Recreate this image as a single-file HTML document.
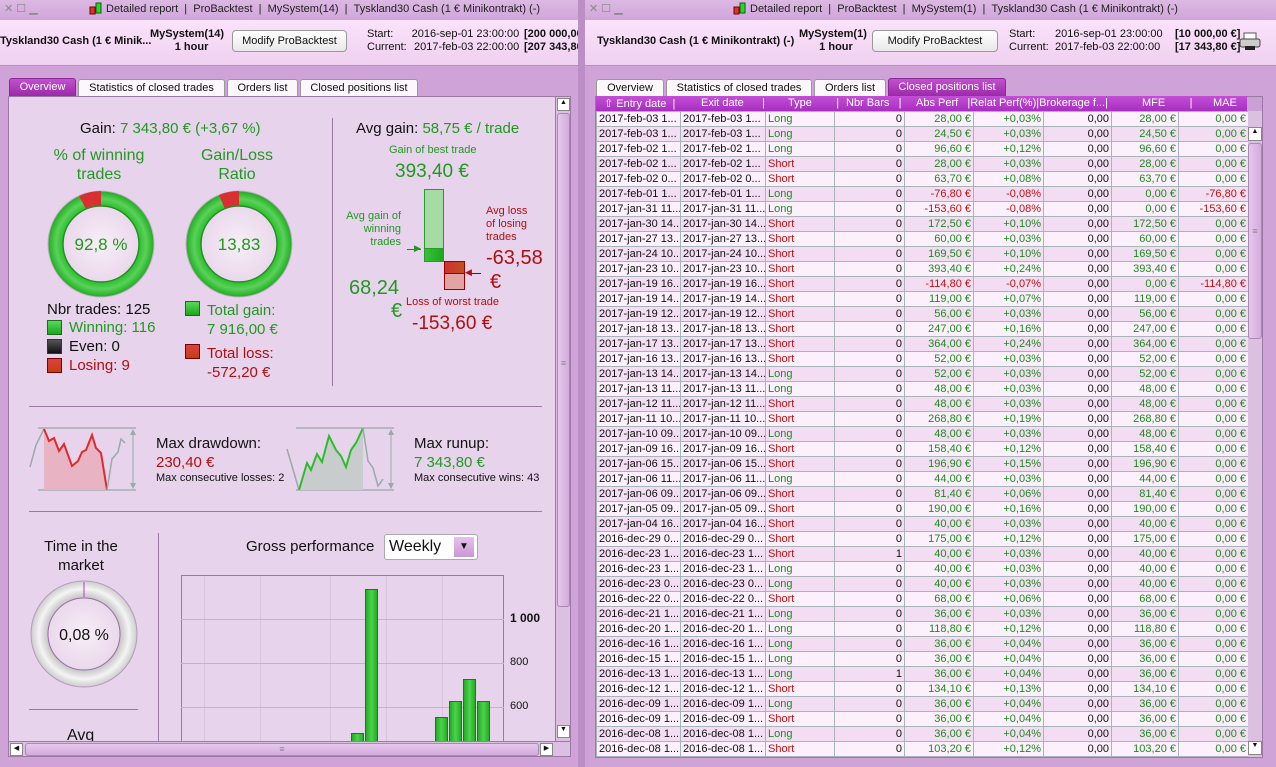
<!DOCTYPE html>
<html><head><meta charset="utf-8">
<style>
*{margin:0;padding:0;box-sizing:border-box}
body{width:1276px;height:767px;overflow:hidden;background:#cfa3d8;font-family:"Liberation Sans",sans-serif;position:relative;font-size:11px;color:#111}
.a{position:absolute;white-space:nowrap}
.tb{position:absolute;top:0;height:20px;background:linear-gradient(#dcb8e3,#d0a6da);font-size:11px;color:#222}
.hd{position:absolute;top:20px;height:46px;background:linear-gradient(#fbe3fb,#efd0f0);border-bottom:1px solid #b58fbf}
.btn{position:absolute;height:22px;border:1px solid #999;border-radius:4px;background:linear-gradient(#fff,#e8e8e8);font-size:11px;text-align:center;line-height:20px}
.tab{position:absolute;height:18px;border:1px solid #999;border-bottom:none;border-radius:3px 3px 0 0;background:#fbf7fb;font-size:11px;text-align:center;line-height:17px}
.tab.on{background:linear-gradient(#c24fd0,#9a2aa8);color:#fff;border-color:#8a2a98}
.g{color:#1f9a1f}.r{color:#b00f0f}
table{border-collapse:collapse;font-size:11px;table-layout:fixed}
td{height:15px;border:1px solid #a8b4b8;padding:0 2px;overflow:hidden;white-space:nowrap;text-align:right;line-height:13px}
td:nth-child(1),td:nth-child(2),td:nth-child(3){text-align:left}
tr:nth-child(odd) td{background:#fbf0fb}
tr:nth-child(even) td{background:#f3ddf2}
td:nth-child(5),td:nth-child(6),td:nth-child(8),td:nth-child(9),td:nth-child(3){color:#1f8a1f}
tr.n td:nth-child(5),tr.n td:nth-child(6),tr.n td:nth-child(9){color:#c01010}
td.s{color:#c01010!important}
.sq{position:absolute;width:15px;height:15px;border:1px solid #333}
</style></head><body>
<!-- LEFT WINDOW -->
<div class="tb" style="left:0;width:580px"><span class="a" style="left:4px;top:2px;color:#888">✕ ☐ ▁</span>
<svg class="a" style="left:88px;top:2px" width="16" height="14"><rect x="2" y="5" width="5" height="7" fill="#e03030" stroke="#700"/><rect x="8" y="1" width="5" height="10" fill="#30d030" stroke="#060"/></svg>
<span class="a" style="left:106px;top:3px">Detailed report&nbsp;&nbsp;|&nbsp;&nbsp;ProBacktest&nbsp;&nbsp;|&nbsp;&nbsp;MySystem(14)&nbsp;&nbsp;|&nbsp;&nbsp;Tyskland30 Cash (1 € Minikontrakt) (-)</span></div>
<div class="hd" style="left:0;width:578px;overflow:hidden">
<span class="a" style="left:0;top:15px;font-weight:bold">Tyskland30 Cash (1 € Minik...</span>
<span class="a" style="left:150px;top:8px;font-weight:bold;text-align:center;line-height:13px">MySystem(14)<br>&nbsp;&nbsp;&nbsp;1 hour</span>
<div class="btn" style="left:232px;top:10px;width:115px">Modify ProBacktest</div>
<span class="a" style="left:367px;top:8px;line-height:13px">Start:<br>Current:</span>
<span class="a" style="left:411px;top:8px;line-height:13px;text-align:right">2016-sep-01 23:00:00<br>&nbsp;2017-feb-03 22:00:00</span>
<span class="a" style="left:524px;top:8px;line-height:13px;font-weight:bold">[200 000,00<br>[207 343,80</span>
</div>
<div class="a" style="left:578px;top:0;width:7px;height:767px;background:#bb8fc5"></div>
<div class="tab on" style="left:9px;top:78px;width:67px">Overview</div>
<div class="tab" style="left:78px;top:79px;width:147px">Statistics of closed trades</div>
<div class="tab" style="left:227px;top:79px;width:71px">Orders list</div>
<div class="tab" style="left:300px;top:79px;width:118px">Closed positions list</div>
<div class="a" style="left:8px;top:96px;width:563px;height:661px;background:#e8d3ec;border:1px solid #9a7aa2;overflow:hidden">
<div class="a" style="left:-8px;top:-96px;width:600px;height:800px">
<span class="a" style="left:79px;top:119px;font-size:15px">Gain: <span class="g">7 343,80 € (+3,67 %)</span></span>
<span class="a g" style="left:48px;top:145px;font-size:16px;text-align:center;line-height:19px;width:100px;white-space:normal">% of winning trades</span>
<span class="a g" style="left:186px;top:145px;font-size:16px;text-align:center;line-height:19px;width:100px;white-space:normal">Gain/Loss Ratio</span>
<svg class="a" style="left:40px;top:183px" width="260" height="120">
<defs><radialGradient id="gg"><stop offset="0.7" stop-color="#1fbf1f"/><stop offset="0.85" stop-color="#5cd05c"/><stop offset="1" stop-color="#1cae1c"/></radialGradient>
<radialGradient id="ci"><stop offset="0" stop-color="#f8eef8"/><stop offset="1" stop-color="#ead8ec"/></radialGradient></defs>
<g transform="translate(60,60)"><circle r="53" fill="url(#gg)" stroke="#c9a8cf"/><path d="M0,-53 A53,53 0 0 0 -22,-48 L-15,-35 A38,38 0 0 1 0,-38Z" fill="#d83030"/><circle r="38" fill="url(#ci)" stroke="#2a8a2a" stroke-width="1.5"/><text y="6" text-anchor="middle" font-size="17" fill="#1f9a1f" font-family="Liberation Sans">92,8 %</text></g>
<g transform="translate(198,60)"><circle r="53" fill="url(#gg)" stroke="#c9a8cf"/><path d="M0,-53 A53,53 0 0 0 -20,-49 L-14,-35 A38,38 0 0 1 0,-38Z" fill="#d83030"/><circle r="38" fill="url(#ci)" stroke="#2a8a2a" stroke-width="1.5"/><text y="6" text-anchor="middle" font-size="17" fill="#1f9a1f" font-family="Liberation Sans">13,83</text></g>
</svg>
<span class="a" style="left:46px;top:300px;font-size:15px">Nbr trades: 125</span>
<div class="sq" style="left:46px;top:319px;background:linear-gradient(#5ad85a,#1aa81a);border-color:#1a6a1a"></div><span class="a g" style="left:68px;top:318px;font-size:15px">Winning: 116</span>
<div class="sq" style="left:46px;top:338px;background:linear-gradient(#555,#111)"></div><span class="a" style="left:68px;top:337px;font-size:15px">Even: 0</span>
<div class="sq" style="left:46px;top:357px;background:linear-gradient(#e04040,#c04010);border-color:#700"></div><span class="a r" style="left:68px;top:356px;font-size:15px">Losing: 9</span>
<div class="sq" style="left:184px;top:300px;background:linear-gradient(#5ad85a,#1aa81a);border-color:#1a6a1a"></div><span class="a g" style="left:206px;top:300px;font-size:15px;line-height:19px">Total gain:<br>7 916,00 €</span>
<div class="sq" style="left:184px;top:343px;background:linear-gradient(#e04040,#c04010);border-color:#700"></div><span class="a r" style="left:206px;top:343px;font-size:15px;line-height:19px">Total loss:<br>-572,20 €</span>
<div class="a" style="left:331px;top:117px;width:1px;height:268px;background:#9a7aa2"></div>
<span class="a" style="left:355px;top:119px;font-size:15px">Avg gain: <span class="g">58,75 € / trade</span></span>
<span class="a g" style="left:388px;top:143px;font-size:11px">Gain of best trade</span>
<span class="a g" style="left:394px;top:160px;font-size:19px">393,40 €</span>
<div class="a" style="left:423px;top:188px;width:20px;height:60px;background:#a6dba6;border:1px solid #2a9a2a"></div>
<div class="a" style="left:423px;top:247px;width:20px;height:14px;background:linear-gradient(90deg,#3ac03a,#1aa81a);border:1px solid #2a9a2a"></div>
<div class="a" style="left:443px;top:260px;width:21px;height:13px;background:linear-gradient(90deg,#d03030,#c05020);border:1px solid #900"></div>
<div class="a" style="left:443px;top:272px;width:21px;height:17px;background:#e0a4a4;border:1px solid #900"></div>
<span class="a g" style="left:330px;top:209px;width:70px;text-align:right;font-size:11px;line-height:13px">Avg gain of<br>winning<br>trades</span>
<div class="a" style="left:406px;top:248px;width:14px;height:1px;background:#1a8a1a"></div><span class="a g" style="left:413px;top:242px;font-size:9px">▶</span>
<span class="a r" style="left:485px;top:204px;font-size:11px;line-height:13px">Avg loss<br>of losing<br>trades</span>
<div class="a" style="left:468px;top:272px;width:12px;height:1px;background:#900"></div><span class="a r" style="left:464px;top:266px;font-size:9px">◀</span>
<span class="a r" style="left:485px;top:246px;font-size:20px">-63,58</span><span class="a r" style="left:489px;top:270px;font-size:20px">€</span>
<span class="a g" style="left:348px;top:276px;font-size:20px">68,24</span><span class="a g" style="left:390px;top:299px;font-size:20px">€</span>
<span class="a r" style="left:405px;top:295px;font-size:11px">Loss of worst trade</span>
<span class="a r" style="left:411px;top:312px;font-size:19px">-153,60 €</span>
<div class="a" style="left:28px;top:405px;width:513px;height:1px;background:#9a7aa2"></div>
<svg class="a" style="left:25px;top:420px" width="120" height="75">
<line x1="12" y1="7" x2="110" y2="7" stroke="#8a9a9a"/><line x1="12" y1="69" x2="110" y2="69" stroke="#8a9a9a"/>
<path d="M18,69 L18,8 L23,20 L28,17 L33,30 L38,23 L46,45 L52,40 L56,31 L60,29 L66,14 L70,27 L75,32 L81,69Z" fill="#e8b4c4"/>
<path d="M4,46 L10,24 L18,8" fill="none" stroke="#9aa" stroke-width="1.5"/>
<path d="M18,8 L23,20 L28,17 L33,30 L38,23 L46,45 L52,40 L56,31 L60,29 L66,14 L70,27 L75,32 L81,69" fill="none" stroke="#e02a2a" stroke-width="2"/>
<path d="M81,69 L86,38 L92,31 L95,18 L99,22" fill="none" stroke="#9aa" stroke-width="1.5"/>
<line x1="107" y1="9" x2="107" y2="67" stroke="#9aa"/><path d="M104,14 L107,8 L110,14Z M104,62 L107,68 L110,62Z" fill="#9aa"/></svg>
<span class="a" style="left:155px;top:434px;font-size:15px">Max drawdown:</span>
<span class="a r" style="left:155px;top:453px;font-size:15px">230,40 €</span>
<span class="a" style="left:155px;top:471px;font-size:11px">Max consecutive losses: 2</span>
<svg class="a" style="left:285px;top:420px" width="120" height="75">
<line x1="10" y1="7" x2="108" y2="7" stroke="#8a9a9a"/><line x1="10" y1="69" x2="108" y2="69" stroke="#8a9a9a"/>
<path d="M13,69 L21,42 L25,49 L31,33 L36,41 L43,15 L50,29 L55,35 L60,46 L65,29 L70,22 L77,7 L77,69Z" fill="#c8cccc"/>
<path d="M1,28 L13,69" fill="none" stroke="#9aa" stroke-width="1.5"/>
<path d="M13,69 L21,42 L25,49 L31,33 L36,41 L43,15 L50,29 L55,35 L60,46 L65,29 L70,22 L77,7" fill="none" stroke="#2abf2a" stroke-width="2"/>
<path d="M77,7 L82,40 L87,47 L92,65 L97,58" fill="none" stroke="#9aa" stroke-width="1.5"/>
<line x1="105" y1="9" x2="105" y2="67" stroke="#9aa"/><path d="M102,14 L105,8 L108,14Z M102,62 L105,68 L108,62Z" fill="#9aa"/></svg>
<span class="a" style="left:413px;top:434px;font-size:15px">Max runup:</span>
<span class="a g" style="left:413px;top:453px;font-size:15px">7 343,80 €</span>
<span class="a" style="left:413px;top:471px;font-size:11px">Max consecutive wins: 43</span>
<div class="a" style="left:28px;top:510px;width:513px;height:1px;background:#9a7aa2"></div>
<span class="a" style="left:30px;top:536px;width:100px;text-align:center;font-size:15px;line-height:19px;white-space:normal">Time in the market</span>
<svg class="a" style="left:28px;top:578px" width="112" height="112"><defs><radialGradient id="gr"><stop offset="0.65" stop-color="#bbb"/><stop offset="0.85" stop-color="#f4f4f4"/><stop offset="1" stop-color="#ccc"/></radialGradient></defs>
<g transform="translate(55,55)"><circle r="53" fill="url(#gr)" stroke="#b59abb"/><circle r="36" fill="url(#ci)" stroke="#9a6aa2"/><line x1="0" y1="-52" x2="0" y2="-37" stroke="#b040c0"/><text y="6" text-anchor="middle" font-size="16" fill="#111" font-family="Liberation Sans">0,08 %</text></g></svg>
<div class="a" style="left:28px;top:708px;width:109px;height:1px;background:#9a7aa2"></div>
<span class="a" style="left:66px;top:726px;font-size:16px">Avg</span>
<div class="a" style="left:157px;top:532px;width:1px;height:210px;background:#9a7aa2"></div>
<span class="a" style="left:245px;top:537px;font-size:15px">Gross performance</span>
<div class="a" style="left:383px;top:533px;width:94px;height:26px;border:1px solid #aaa;border-radius:3px;background:#fff;font-size:16px;padding:3px 0 0 4px">Weekly<div class="a" style="left:69px;top:2px;width:20px;height:20px;background:linear-gradient(#e8c0ee,#c898d2);font-size:10px;text-align:center;line-height:20px">▼</div></div>
<div class="a" style="left:180px;top:574px;width:323px;height:170px;border:1px solid #9a7aa2"></div>
<div class="a" style="left:203px;top:575px;width:1px;height:170px;background:#d8c4dc"></div>
<div class="a" style="left:259px;top:575px;width:1px;height:170px;background:#d8c4dc"></div>
<div class="a" style="left:329px;top:575px;width:1px;height:170px;background:#d8c4dc"></div>
<div class="a" style="left:385px;top:575px;width:1px;height:170px;background:#d8c4dc"></div>
<div class="a" style="left:441px;top:575px;width:1px;height:170px;background:#d8c4dc"></div>
<div class="a" style="left:180px;top:618px;width:323px;height:1px;background:#c4b4c8"></div>
<div class="a" style="left:180px;top:662px;width:323px;height:1px;background:#c4b4c8"></div>
<div class="a" style="left:180px;top:706px;width:323px;height:1px;background:#c4b4c8"></div>
<div class="a" style="left:350px;top:732px;width:13px;height:20px;background:linear-gradient(90deg,#20b020,#50d050,#20b020);border:1px solid #1a7a1a"></div>
<div class="a" style="left:364px;top:588px;width:13px;height:160px;background:linear-gradient(90deg,#20b020,#50d050,#20b020);border:1px solid #1a7a1a"></div>
<div class="a" style="left:434px;top:716px;width:13px;height:30px;background:linear-gradient(90deg,#20b020,#50d050,#20b020);border:1px solid #1a7a1a"></div>
<div class="a" style="left:448px;top:700px;width:13px;height:50px;background:linear-gradient(90deg,#20b020,#50d050,#20b020);border:1px solid #1a7a1a"></div>
<div class="a" style="left:462px;top:678px;width:13px;height:70px;background:linear-gradient(90deg,#20b020,#50d050,#20b020);border:1px solid #1a7a1a"></div>
<div class="a" style="left:476px;top:700px;width:13px;height:50px;background:linear-gradient(90deg,#20b020,#50d050,#20b020);border:1px solid #1a7a1a"></div>
<span class="a" style="left:509px;top:610px;font-size:12px;font-weight:bold">1 000</span>
<span class="a" style="left:509px;top:655px;font-size:11px">800</span>
<span class="a" style="left:509px;top:699px;font-size:11px">600</span>
</div>
<div class="a" style="left:546px;top:0;width:16px;height:644px;background:#dcc0e2;border-left:1px solid #9a7aa2">
<div class="a" style="left:1px;top:1px;width:13px;height:13px;background:#fff;border:1px solid #888;font-size:7px;text-align:center">▲</div>
<div class="a" style="left:1px;top:16px;width:13px;height:494px;background:linear-gradient(90deg,#e6c8ec,#d4aade);border:1px solid #a88ab0;border-radius:3px;font-size:9px;text-align:center;padding-top:244px;color:#888">≡</div>
<div class="a" style="left:1px;top:628px;width:13px;height:13px;background:#fff;border:1px solid #888;font-size:7px;text-align:center">▼</div></div>
<div class="a" style="left:0;top:644px;width:562px;height:16px;background:#dcc0e2;border-top:1px solid #9a7aa2">
<div class="a" style="left:1px;top:1px;width:13px;height:13px;background:#fff;border:1px solid #888;font-size:7px;text-align:center">◀</div>
<div class="a" style="left:16px;top:1px;width:514px;height:13px;background:linear-gradient(#e6c8ec,#d4aade);border:1px solid #a88ab0;border-radius:3px;font-size:9px;text-align:center;color:#888">≡</div>
<div class="a" style="left:531px;top:1px;width:13px;height:13px;background:#fff;border:1px solid #888;font-size:7px;text-align:center">▶</div></div>
</div>

<!-- RIGHT WINDOW -->
<div class="tb" style="left:585px;width:691px"><span class="a" style="left:4px;top:2px;color:#888">✕ ☐ ▁</span>
<svg class="a" style="left:147px;top:2px" width="16" height="14"><rect x="2" y="5" width="5" height="7" fill="#e03030" stroke="#700"/><rect x="8" y="1" width="5" height="10" fill="#30d030" stroke="#060"/></svg>
<span class="a" style="left:165px;top:3px">Detailed report&nbsp;&nbsp;|&nbsp;&nbsp;ProBacktest&nbsp;&nbsp;|&nbsp;&nbsp;MySystem(1)&nbsp;&nbsp;|&nbsp;&nbsp;Tyskland30 Cash (1 € Minikontrakt) (-)</span></div>
<div class="hd" style="left:585px;width:691px">
<span class="a" style="left:12px;top:15px;font-weight:bold">Tyskland30 Cash (1 € Minikontrakt) (-)</span>
<span class="a" style="left:214px;top:8px;font-weight:bold;text-align:center;line-height:13px">MySystem(1)<br>&nbsp;&nbsp;1 hour</span>
<div class="btn" style="left:287px;top:10px;width:126px">Modify ProBacktest</div>
<span class="a" style="left:424px;top:8px;line-height:13px">Start:<br>Current:</span>
<span class="a" style="left:470px;top:8px;line-height:13px">2016-sep-01 23:00:00<br>2017-feb-03 22:00:00</span>
<span class="a" style="left:590px;top:8px;line-height:13px;font-weight:bold">[10 000,00 €]<br>[17 343,80 €]</span>
<svg class="a" style="left:654px;top:12px" width="22" height="20"><rect x="5" y="1" width="12" height="7" fill="#fff" stroke="#555"/><rect x="1" y="7" width="20" height="8" rx="2" fill="#ccc" stroke="#444"/><rect x="6" y="14" width="10" height="4" fill="#222"/></svg>
</div>
<div class="tab" style="left:596px;top:79px;width:68px">Overview</div>
<div class="tab" style="left:666px;top:79px;width:146px">Statistics of closed trades</div>
<div class="tab" style="left:814px;top:79px;width:72px">Orders list</div>
<div class="tab on" style="left:888px;top:78px;width:118px">Closed positions list</div>
<div class="a" style="left:595px;top:96px;width:668px;height:662px;background:#cba0d4;border:1px solid #9a7aa2"></div>
<div class="a" style="left:596px;top:96px;width:651px;height:15px;background:linear-gradient(#c24fd6,#a82ec0);color:#fff;font-size:11px">
<span class="a" style="left:8px;top:1px">⇧ Entry date&nbsp;&nbsp;|</span><span class="a" style="left:105px;top:1px">Exit date&nbsp;&nbsp;&nbsp;&nbsp;&nbsp;&nbsp;|</span><span class="a" style="left:192px;top:1px">Type&nbsp;&nbsp;&nbsp;&nbsp;&nbsp;&nbsp;&nbsp;&nbsp;|</span><span class="a" style="left:250px;top:1px">Nbr Bars&nbsp;&nbsp;&nbsp;|</span><span class="a" style="left:320px;top:1px">Abs Perf&nbsp;&nbsp;&nbsp;|Relat Perf(%)|Brokerage f...|</span><span class="a" style="left:546px;top:1px">MFE&nbsp;&nbsp;&nbsp;&nbsp;&nbsp;&nbsp;&nbsp;&nbsp;|</span><span class="a" style="left:617px;top:1px">MAE</span></div>
<table class="a" style="left:596px;top:111px;width:652px">
<colgroup><col style="width:84px"><col style="width:85px"><col style="width:69px"><col style="width:70px"><col style="width:69px"><col style="width:70px"><col style="width:68px"><col style="width:67px"><col style="width:70px"></colgroup>
<tr><td>2017-feb-03 1...<td>2017-feb-03 1...<td>Long<td>0<td>28,00 €<td>+0,03%<td>0,00<td>28,00 €<td>0,00 €
<tr><td>2017-feb-03 1...<td>2017-feb-03 1...<td>Long<td>0<td>24,50 €<td>+0,03%<td>0,00<td>24,50 €<td>0,00 €
<tr><td>2017-feb-02 1...<td>2017-feb-02 1...<td>Long<td>0<td>96,60 €<td>+0,12%<td>0,00<td>96,60 €<td>0,00 €
<tr><td>2017-feb-02 1...<td>2017-feb-02 1...<td class=s>Short<td>0<td>28,00 €<td>+0,03%<td>0,00<td>28,00 €<td>0,00 €
<tr><td>2017-feb-02 0...<td>2017-feb-02 0...<td class=s>Short<td>0<td>63,70 €<td>+0,08%<td>0,00<td>63,70 €<td>0,00 €
<tr class=n><td>2017-feb-01 1...<td>2017-feb-01 1...<td>Long<td>0<td>-76,80 €<td>-0,08%<td>0,00<td>0,00 €<td>-76,80 €
<tr class=n><td>2017-jan-31 11...<td>2017-jan-31 11...<td>Long<td>0<td>-153,60 €<td>-0,08%<td>0,00<td>0,00 €<td>-153,60 €
<tr><td>2017-jan-30 14...<td>2017-jan-30 14...<td class=s>Short<td>0<td>172,50 €<td>+0,10%<td>0,00<td>172,50 €<td>0,00 €
<tr><td>2017-jan-27 13...<td>2017-jan-27 13...<td class=s>Short<td>0<td>60,00 €<td>+0,03%<td>0,00<td>60,00 €<td>0,00 €
<tr><td>2017-jan-24 10...<td>2017-jan-24 10...<td class=s>Short<td>0<td>169,50 €<td>+0,10%<td>0,00<td>169,50 €<td>0,00 €
<tr><td>2017-jan-23 10...<td>2017-jan-23 10...<td class=s>Short<td>0<td>393,40 €<td>+0,24%<td>0,00<td>393,40 €<td>0,00 €
<tr class=n><td>2017-jan-19 16...<td>2017-jan-19 16...<td class=s>Short<td>0<td>-114,80 €<td>-0,07%<td>0,00<td>0,00 €<td>-114,80 €
<tr><td>2017-jan-19 14...<td>2017-jan-19 14...<td class=s>Short<td>0<td>119,00 €<td>+0,07%<td>0,00<td>119,00 €<td>0,00 €
<tr><td>2017-jan-19 12...<td>2017-jan-19 12...<td class=s>Short<td>0<td>56,00 €<td>+0,03%<td>0,00<td>56,00 €<td>0,00 €
<tr><td>2017-jan-18 13...<td>2017-jan-18 13...<td class=s>Short<td>0<td>247,00 €<td>+0,16%<td>0,00<td>247,00 €<td>0,00 €
<tr><td>2017-jan-17 13...<td>2017-jan-17 13...<td class=s>Short<td>0<td>364,00 €<td>+0,24%<td>0,00<td>364,00 €<td>0,00 €
<tr><td>2017-jan-16 13...<td>2017-jan-16 13...<td class=s>Short<td>0<td>52,00 €<td>+0,03%<td>0,00<td>52,00 €<td>0,00 €
<tr><td>2017-jan-13 14...<td>2017-jan-13 14...<td>Long<td>0<td>52,00 €<td>+0,03%<td>0,00<td>52,00 €<td>0,00 €
<tr><td>2017-jan-13 11...<td>2017-jan-13 11...<td>Long<td>0<td>48,00 €<td>+0,03%<td>0,00<td>48,00 €<td>0,00 €
<tr><td>2017-jan-12 11...<td>2017-jan-12 11...<td class=s>Short<td>0<td>48,00 €<td>+0,03%<td>0,00<td>48,00 €<td>0,00 €
<tr><td>2017-jan-11 10...<td>2017-jan-11 10...<td class=s>Short<td>0<td>268,80 €<td>+0,19%<td>0,00<td>268,80 €<td>0,00 €
<tr><td>2017-jan-10 09...<td>2017-jan-10 09...<td>Long<td>0<td>48,00 €<td>+0,03%<td>0,00<td>48,00 €<td>0,00 €
<tr><td>2017-jan-09 16...<td>2017-jan-09 16...<td class=s>Short<td>0<td>158,40 €<td>+0,12%<td>0,00<td>158,40 €<td>0,00 €
<tr><td>2017-jan-06 15...<td>2017-jan-06 15...<td class=s>Short<td>0<td>196,90 €<td>+0,15%<td>0,00<td>196,90 €<td>0,00 €
<tr><td>2017-jan-06 11...<td>2017-jan-06 11...<td>Long<td>0<td>44,00 €<td>+0,03%<td>0,00<td>44,00 €<td>0,00 €
<tr><td>2017-jan-06 09...<td>2017-jan-06 09...<td class=s>Short<td>0<td>81,40 €<td>+0,06%<td>0,00<td>81,40 €<td>0,00 €
<tr><td>2017-jan-05 09...<td>2017-jan-05 09...<td class=s>Short<td>0<td>190,00 €<td>+0,16%<td>0,00<td>190,00 €<td>0,00 €
<tr><td>2017-jan-04 16...<td>2017-jan-04 16...<td class=s>Short<td>0<td>40,00 €<td>+0,03%<td>0,00<td>40,00 €<td>0,00 €
<tr><td>2016-dec-29 0...<td>2016-dec-29 0...<td class=s>Short<td>0<td>175,00 €<td>+0,12%<td>0,00<td>175,00 €<td>0,00 €
<tr><td>2016-dec-23 1...<td>2016-dec-23 1...<td class=s>Short<td>1<td>40,00 €<td>+0,03%<td>0,00<td>40,00 €<td>0,00 €
<tr><td>2016-dec-23 1...<td>2016-dec-23 1...<td>Long<td>0<td>40,00 €<td>+0,03%<td>0,00<td>40,00 €<td>0,00 €
<tr><td>2016-dec-23 0...<td>2016-dec-23 0...<td>Long<td>0<td>40,00 €<td>+0,03%<td>0,00<td>40,00 €<td>0,00 €
<tr><td>2016-dec-22 0...<td>2016-dec-22 0...<td class=s>Short<td>0<td>68,00 €<td>+0,06%<td>0,00<td>68,00 €<td>0,00 €
<tr><td>2016-dec-21 1...<td>2016-dec-21 1...<td>Long<td>0<td>36,00 €<td>+0,03%<td>0,00<td>36,00 €<td>0,00 €
<tr><td>2016-dec-20 1...<td>2016-dec-20 1...<td>Long<td>0<td>118,80 €<td>+0,12%<td>0,00<td>118,80 €<td>0,00 €
<tr><td>2016-dec-16 1...<td>2016-dec-16 1...<td>Long<td>0<td>36,00 €<td>+0,04%<td>0,00<td>36,00 €<td>0,00 €
<tr><td>2016-dec-15 1...<td>2016-dec-15 1...<td>Long<td>0<td>36,00 €<td>+0,04%<td>0,00<td>36,00 €<td>0,00 €
<tr><td>2016-dec-13 1...<td>2016-dec-13 1...<td>Long<td>1<td>36,00 €<td>+0,04%<td>0,00<td>36,00 €<td>0,00 €
<tr><td>2016-dec-12 1...<td>2016-dec-12 1...<td class=s>Short<td>0<td>134,10 €<td>+0,13%<td>0,00<td>134,10 €<td>0,00 €
<tr><td>2016-dec-09 1...<td>2016-dec-09 1...<td>Long<td>0<td>36,00 €<td>+0,04%<td>0,00<td>36,00 €<td>0,00 €
<tr><td>2016-dec-09 1...<td>2016-dec-09 1...<td class=s>Short<td>0<td>36,00 €<td>+0,04%<td>0,00<td>36,00 €<td>0,00 €
<tr><td>2016-dec-08 1...<td>2016-dec-08 1...<td>Long<td>0<td>36,00 €<td>+0,04%<td>0,00<td>36,00 €<td>0,00 €
<tr><td>2016-dec-08 1...<td>2016-dec-08 1...<td class=s>Short<td>0<td>103,20 €<td>+0,12%<td>0,00<td>103,20 €<td>0,00 €
</table>
<div class="a" style="left:1248px;top:111px;width:14px;height:646px;background:#dcc0e2">
<div class="a" style="left:0;top:16px;width:14px;height:14px;background:#fff;border:1px solid #888;font-size:7px;text-align:center">▲</div>
<div class="a" style="left:0;top:32px;width:14px;height:196px;background:linear-gradient(90deg,#e6c8ec,#d4aade);border:1px solid #a88ab0;border-radius:3px;font-size:9px;text-align:center;padding-top:82px;color:#888">≡</div>
<div class="a" style="left:0;top:630px;width:14px;height:14px;background:#fff;border:1px solid #888;font-size:7px;text-align:center">▼</div></div>
</body></html>
